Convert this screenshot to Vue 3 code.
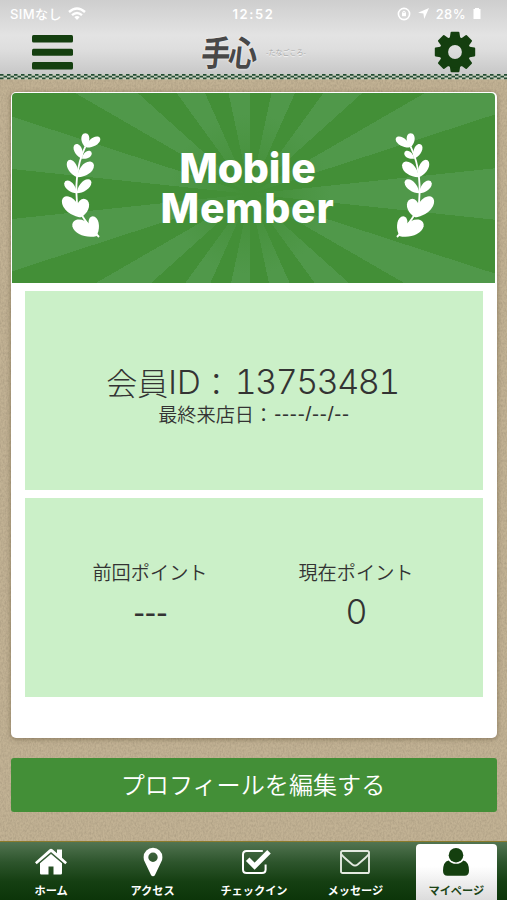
<script setup>
// Leaf: [baseX, baseY, tipX, tipY, relative width]
const leaves = [
  [106, 80, 106, 37, 0.55], [106, 80, 150, 51, 0.45],
  [96, 114, 76, 70, 0.48], [96, 114, 124, 93, 0.55],
  [82, 170, 56, 118, 0.47], [82, 170, 129, 126, 0.5],
  [80, 218, 45, 182, 0.48], [80, 218, 122, 178, 0.46],
  [93, 290, 40, 230, 0.48], [93, 290, 104, 234, 0.6],
  [141, 346, 68, 305, 0.5], [139, 346, 126, 286, 0.48],
]
function leafPath([bx, by, tx, ty, w]) {
  const dx = tx - bx
  const dy = ty - by
  const p = (along, side) =>
    `${(bx + dx * along - dy * side * w).toFixed(1)} ${(by + dy * along + dx * side * w).toFixed(1)}`
  return `M${p(0, 0)}C${p(0.25, 0.5)} ${p(0.72, 0.72)} ${p(0.94, 0.26)}Q${p(1.04, 0)} ${p(0.94, -0.26)}C${p(0.72, -0.72)} ${p(0.25, -0.5)} ${p(0, 0)}Z`
}
const laurel = leaves.map(leafPath)
const stem = 'M106 78Q86 120 81 170Q76 215 84 272M93 280Q112 312 147 349'
const teeth = [0, 45, 90, 135, 180, 225, 270, 315]
const tabs = [
  { id: 'home', label: 'ホーム' },
  { id: 'access', label: 'アクセス' },
  { id: 'check', label: 'チェックイン' },
  { id: 'mail', label: 'メッセージ' },
  { id: 'user', label: 'マイページ', active: true },
]
</script>

<template>
  <div class="screen">
    <svg class="grain" width="507" height="900">
      <filter id="linen" x="0" y="0" width="100%" height="100%">
        <feTurbulence type="fractalNoise" baseFrequency="0.6 0.4" numOctaves="2" seed="4" />
        <feColorMatrix values="0 0 0 0 0.33  0 0 0 0 0.27  0 0 0 0 0.18  0.9 0 0 0 -0.3" />
      </filter>
      <rect width="507" height="900" filter="url(#linen)" />
    </svg>

    <header class="header">
      <div class="status">
        <div class="carrier">
          <span>SIMなし</span>
          <svg width="18" height="13" viewBox="0 0 18 13" fill="none" stroke="#fff" stroke-width="2.4">
            <path d="M1 5Q9-2 17 5M4 8.2Q9 3.8 14 8.2" />
            <path d="M6.3 10Q9 8 11.7 10L9 13Z" fill="#fff" stroke="none" />
          </svg>
        </div>
        <span class="clock">12:52</span>
        <div class="battery">
          <svg width="14" height="14" viewBox="0 0 14 14" fill="none" stroke="#fff" stroke-width="1.6">
            <circle cx="7" cy="7" r="5.6" /><rect x="5" y="5.8" width="4" height="3.4" fill="#fff" stroke="none" />
            <path d="M5.8 6V4.8Q7 3.4 8.2 4.8V6" stroke-width="1" />
          </svg>
          <svg width="11" height="11" viewBox="0 0 11 11" fill="#fff"><path d="M11 0L6.2 11L5.4 5.6L0 4.8Z" /></svg>
          <span>28%</span>
          <svg width="8" height="11" viewBox="0 0 8 11" fill="#fff"><path d="M2 0H6V1H7.5V11H.5V1H2Z" /></svg>
        </div>
      </div>
      <div class="bar">
        <svg class="burger" width="41" height="35" viewBox="0 0 41 35" fill="#143f0f">
          <rect width="41" height="7.4" rx="1.5" /><rect y="13.7" width="41" height="7" rx="1.5" /><rect y="27" width="41" height="7.4" rx="1.5" />
        </svg>
        <div class="logo"><span class="brush">手心</span><span class="kana">-たなごころ-</span></div>
        <svg class="gear" width="42" height="42" viewBox="-21 -21 42 42" fill="#143f0f">
          <path v-for="a in teeth" :key="a" d="M-5.4-13L-4.4-19.4Q-4.3-20.2-3.5-20.2H3.5Q4.3-20.2 4.4-19.4L5.4-13Z" :transform="`rotate(${a})`" />
          <circle r="11.2" fill="none" stroke="#143f0f" stroke-width="8.6" />
        </svg>
      </div>
      <svg class="checker" width="507" height="6">
        <defs>
          <pattern id="chk" width="7" height="6" patternUnits="userSpaceOnUse">
            <rect width="7" height="6" fill="#c9d0c0" />
            <path d="M0 0H3.5V1.8H0ZM3.5 1.8H7V3.6H3.5ZM0 3.6H3.5V5.4H0Z" fill="#244d34" />
          </pattern>
        </defs>
        <rect width="507" height="5.4" fill="url(#chk)" />
      </svg>
    </header>

    <main class="content">
      <section class="card">
        <div class="hero">
          <svg class="laurel" width="39" height="106" viewBox="36 34 117 318" fill="#fff">
            <path v-for="(d, i) in laurel" :key="i" :d="d" />
            <path :d="stem" fill="none" stroke="#fff" stroke-width="5.5" />
          </svg>
          <h1 class="title"><span class="first">Mobile</span><span class="second">Member</span></h1>
          <svg class="laurel flip" width="39" height="106" viewBox="36 34 117 318" fill="#fff">
            <path v-for="(d, i) in laurel" :key="i" :d="d" />
            <path :d="stem" fill="none" stroke="#fff" stroke-width="5.5" />
          </svg>
        </div>
        <div class="panel member">
          <div class="member-id"><span>会員</span><span class="latin">ID</span><span>：</span><span class="digits">13753481</span></div>
          <div class="visit"><span>最終来店日：</span><span class="dashes">----/--/--</span></div>
        </div>
        <div class="panel points">
          <div class="point"><span class="caption">前回ポイント</span><span class="value hyphens">---</span></div>
          <div class="point"><span class="caption">現在ポイント</span><span class="value">0</span></div>
        </div>
      </section>
      <button class="edit">プロフィールを編集する</button>
    </main>

    <nav class="tabs">
      <div v-for="t in tabs" :key="t.id" class="tab" :class="{ active: t.active }">
        <svg v-if="t.id === 'home'" width="32" height="30" viewBox="0 0 32 30" fill="#fff">
          <path d="M0 15.2L14.3 2.5Q16 1.2 17.7 2.5L22 6.3V2.5H27V10.7L32 15.2L30.3 17.2L16 4.9L1.7 17.2Z" />
          <path d="M5 16.2L16 7L27 16.2V26.2Q27 27.5 25.7 27.5H18.5V19.5H13.5V27.5H6.3Q5 27.5 5 26.2Z" />
        </svg>
        <svg v-else-if="t.id === 'access'" width="20" height="30" viewBox="0 0 20 30">
          <path fill="#fff" fill-rule="evenodd" d="M10 .8A9.4 9.4 0 0 1 19.4 10.2Q19.4 12.5 18.4 14.6L12 28Q11.3 29.3 10 29.3T8 28L1.6 14.6Q.6 12.5.6 10.2A9.4 9.4 0 0 1 10 .8ZM10 5.6A4.7 4.7 0 1 0 10 15A4.7 4.7 0 1 0 10 5.6Z" />
        </svg>
        <svg v-else-if="t.id === 'check'" class="check" width="30" height="30" viewBox="0 0 30 30" fill="none" stroke="#fff">
          <path d="M21.8 4H5.5Q2 4 2 7.5V22.5Q2 26 5.5 26H21Q24.6 26 24.6 22.5V17.5" stroke-width="2" />
          <path d="M6.7 12.3L13.6 19.2L28 4.8" stroke-width="5" />
        </svg>
        <svg v-else-if="t.id === 'mail'" width="30" height="30" viewBox="0 0 30 30" fill="none" stroke="#e4eae0" stroke-width="1.9">
          <rect x="1" y="4" width="28" height="22" rx="1.6" />
          <path d="M1.5 7.5Q2.5 9.3 12.3 17.4Q15 19.6 17.7 17.4Q27.5 9.3 28.5 7.5" />
        </svg>
        <svg v-else width="28" height="30" viewBox="0 0 28 30" fill="#143f0f">
          <circle cx="14" cy="8.2" r="7.3" />
          <path d="M6.6 13.4Q9.5 16.8 14 16.8T21.4 13.4Q27 14.6 27 23.8Q27 28.8 22.5 28.8H5.5Q1 28.8 1 23.8Q1 14.6 6.6 13.4Z" />
        </svg>
        <span class="label">{{ t.label }}</span>
      </div>
    </nav>
  </div>
</template>

<style>
body { margin: 0; }
</style>
<style scoped>
* { box-sizing: border-box; }
.screen {
  position: relative;
  width: 507px; height: 900px;
  display: flex; flex-direction: column;
  overflow: hidden;
  background: #c2b294;
  color: #333;
  font-family: "Noto Sans CJK JP", sans-serif;
}
.screen > * { position: relative; }
.screen > .grain { position: absolute; inset: 0; }
.header {
  height: 80px; flex: none;
  display: flex; flex-direction: column;
  background: linear-gradient(#cecece, #e3e3e3 45%, #dedede 62%, #c9c9c9 92%) 0 0 / 100% 79px no-repeat;
}
.status {
  height: 27px; padding: 0 26px 0 10px;
  display: grid; grid-template-columns: 1fr auto 1fr; align-items: center;
  color: #fff; font: 500 13px Inter, "Noto Sans CJK JP", sans-serif;
}
.carrier, .battery { display: flex; align-items: center; gap: 6px; }
.carrier { letter-spacing: .4px; }
.battery { justify-content: flex-end; gap: 7px; letter-spacing: .4px; }
.clock { font-weight: 600; letter-spacing: 1.6px; padding-left: 16px; }
.bar { height: 47px; display: flex; align-items: center; justify-content: space-between; padding: 3px 31px 0 32px; }
.logo { display: flex; align-items: center; width: 110px; margin-left: 7px; }
.brush {
  font-size: 29px; font-weight: 700; line-height: 40px; color: #484848;
  letter-spacing: -2px; transform: translateY(-2px) skewX(-6deg) scaleY(1.2);
  text-shadow: 0 0 2px #fff;
}
.kana { margin-left: 10px; font-size: 7px; color: #aaa; white-space: nowrap; letter-spacing: 0; text-shadow: 0 1px 1px #fff; }
.checker { display: block; }
.content { flex: 1; padding: 12px 10px 0 11px; display: flex; flex-direction: column; gap: 20px; }
.card {
  height: 646px; flex: none;
  display: flex; flex-direction: column;
  background: #fff; border-radius: 5px; overflow: hidden;
  padding: 1px 1px 0 1px;
  box-shadow: 0 1px 5px #62543b99;
}
.hero {
  height: 190px; flex: none; width: 483px;
  border-radius: 4px 4px 0 0;
  padding: 0 50px;
  display: flex; align-items: center; justify-content: space-between;
  background:
    radial-gradient(circle at 238px 101px, #438f37 5px, #438f3700 80px),
    repeating-conic-gradient(from 0deg at 238px 101px, #438f37 0 12deg, #50984a 12deg 24deg);
}
.laurel { margin-top: -7px; overflow: visible; }
.flip { transform: scaleX(-1); margin-right: 11px; }
.title {
  margin: 0 0 0 -1px; display: flex; flex-direction: column; align-items: center;
  font: 800 41px/40px Inter, sans-serif; color: #fff;
}
.first { letter-spacing: -.3px; }
.second { letter-spacing: .8px; }
.panel { margin: 0 13px 8px 13px; height: 199px; flex: none; background: #cbf0c8; }
.member { margin-top: 8px; display: flex; flex-direction: column; align-items: center; padding-top: 71px; }
.member-id { display: flex; font-size: 31px; line-height: 40px; font-weight: 300; margin-right: 3px; }
.latin { font-family: Inter, sans-serif; font-size: 33px; }
.digits { font-family: Inter, sans-serif; font-size: 34px; font-feature-settings: "tnum"; letter-spacing: -1.5px; margin-left: 3px; }
.visit { display: flex; font-size: 19.2px; line-height: 24px; font-weight: 350; }
.dashes { font-family: "Liberation Sans", sans-serif; font-size: 21px; letter-spacing: .8px; margin-left: 1px; }
.points { display: grid; grid-template-columns: 206px 206px; justify-content: center; padding: 60px 2px 0 0; }
.point { display: flex; flex-direction: column; align-items: center; }
.caption { font-size: 19.2px; line-height: 28px; font-weight: 350; }
.value { font: 300 34px/52px Inter, sans-serif; padding-left: 1px; }
.hyphens { font-family: "Liberation Sans", sans-serif; }
.edit {
  height: 54px; flex: none; border: 0; border-radius: 3px; padding: 0 2px 4px 0;
  background: #438f37; color: #fff;
  font: 350 24.1px "Noto Sans CJK JP", sans-serif;
}
.tabs {
  height: 59px; flex: none;
  border-top: 1px solid #8b7a2c;
  display: grid; grid-template-columns: repeat(5, 1fr);
  background: linear-gradient(#527451, #2d552c 35%, #153f12 68%, #0c3509);
}
.tab { margin: 2px 10px 0; border-radius: 4px 4px 0 0; display: flex; flex-direction: column; align-items: center; padding: 3px 0 0 1px; color: #fff; }
.check { margin-left: 4px; }
.active { background: linear-gradient(#fff 40%, #dcdcdc); color: #1c4517; padding-left: 0; }
.label { font-size: 11.2px; line-height: 14px; margin-top: 6px; font-weight: 700; white-space: nowrap; }
</style>
